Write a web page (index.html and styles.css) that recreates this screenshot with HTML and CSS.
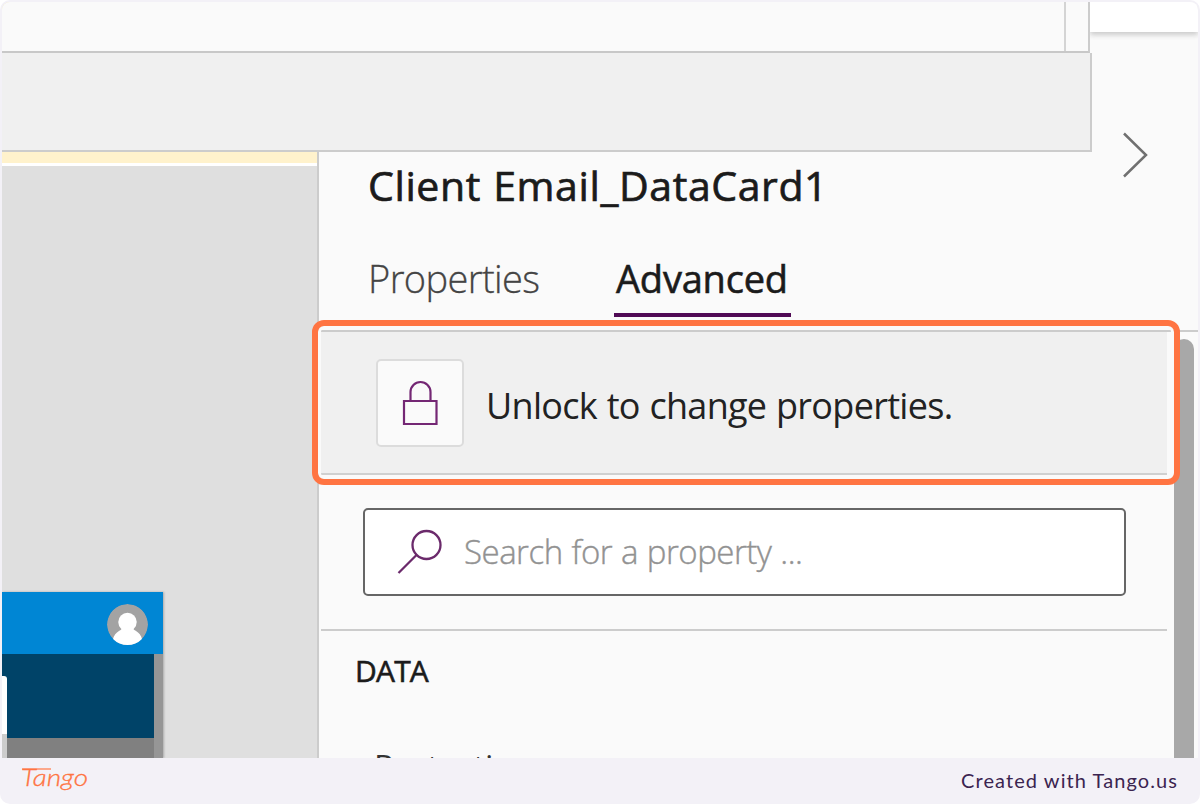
FILE: index.html
```html
<!DOCTYPE html>
<html lang="en">
<head>
<meta charset="utf-8">
<title>Client Email_DataCard1</title>
<link rel="stylesheet" href="styles.css">
</head>
<body>
<div class="frame">
  <div class="app">
    <div class="workspace">
      <main class="canvas">
        <div class="notice"></div>
        <div class="stage">
          <div class="preview">
            <div class="preview-bar">
              <svg class="avatar" viewBox="0 0 40 40"><defs><clipPath id="disc"><circle cx="20" cy="20" r="20"/></clipPath></defs><g clip-path="url(#disc)"><circle cx="20" cy="20" r="20" fill="#a3a3a3"/><circle cx="20" cy="17.5" r="9" fill="#fff"/><path d="M15 22h10q0 3 3 4 5 3 6 8v6H6v-6q1-5 6-8 3-1 3-4z" fill="#fff"/></g></svg>
            </div>
            <div class="preview-body"><div class="preview-card"></div></div>
          </div>
        </div>
      </main>
      <aside class="panel">
        <h1 class="title">Client Email_DataCard1</h1>
        <nav class="tabs">
          <a class="tab">Properties</a>
          <a class="tab active">Advanced</a>
        </nav>
        <div class="panel-body">
          <div class="content">
            <div class="lock-row">
              <button class="lock-button"><svg width="36" height="46" viewBox="0 0 36 46" fill="none" stroke="#742774" stroke-width="2.2"><path d="M8.5 21V12a10 10 0 0 1 20 0V21M2 21h32.500v23h-32.500z"/></svg></button>
              <span class="lock-text">Unlock to change properties.</span>
            </div>
            <div class="search">
              <svg width="46" height="46" viewBox="0 0 46 46" fill="none" stroke="#6b2a6b" stroke-width="2.3"><circle cx="29.500" cy="16" r="14"/><path d="M19.500 26 1.500 44"/></svg>
              <span class="search-text">Search for a property ...</span>
            </div>
            <section class="group">
              <h2 class="group-title">DATA</h2>
              <div class="field">Protection</div>
            </section>
          </div>
          <div class="scrollbar"></div>
        </div>
      </aside>
    </div>
    <div class="topbar"></div>
    <div class="formula">
      <div class="formula-input"><div class="formula-toggle"></div></div>
      <div class="formula-result"></div>
    </div>
    <svg class="chevron" width="28" height="48" viewBox="0 0 28 48" fill="none" stroke="#707070" stroke-width="2.5"><path d="M3 2.500 25 24 3 45.500"/></svg>
    <div class="highlight"></div>
  </div>
  <footer class="footer">
    <svg class="brand" width="74" height="40" viewBox="0 0 74 40"><path d="M2 6h29" stroke="#ff8f68" stroke-width="1.600"/><text x="1" y="23" textLength="67" lengthAdjust="spacingAndGlyphs">Tango</text></svg>
    <span class="credit">Created with Tango.us</span>
  </footer>
</div>
</body>
</html>
```
FILE: styles.css
```css
* { box-sizing: border-box; }
body { margin: 0; background: #fff; font-family: "Open Sans", "Noto Sans", sans-serif; }
.frame { width: 1200px; height: 804px; padding: 2px 2px 0; background: #f3f1f7; border-radius: 10px; display: flex; flex-direction: column; overflow: hidden; }
.app { position: relative; height: 756px; flex: none; overflow: hidden; border-radius: 8px 8px 0 0; background: #fafafa; }
.workspace { display: flex; height: 756px; }
.canvas { width: 315px; flex: none; background: #dfdfdf; display: flex; flex-direction: column; }
.notice { height: 164px; background: #fff2cc; border-bottom: 3px solid #fff; }
.stage { flex: 1; display: flex; align-items: flex-end; }
.preview { width: 161px; height: 166px; display: flex; flex-direction: column; box-shadow: 1px 0 2px #aaa; background: #969696; }
.preview-bar { height: 62px; background: #0086d4; padding: 12px 15px 0 0; display: flex; justify-content: flex-end; }
.avatar { width: 41px; height: 41px; }
.preview-body { width: 152px; height: 104px; background: linear-gradient(#004368 84px, #808080 84px); padding-top: 22px; }
.preview-card { width: 5px; height: 82px; background: linear-gradient(#fff 58px, #ccc 58px); border-radius: 0 3px 0 0; }
.panel { flex: 1; border-left: 2px solid #ccc; background: #fafafa; padding-top: 159px; display: flex; flex-direction: column; }
.title { margin: 0 0 0 49px; height: 48px; line-height: 48px; font-size: 41px; font-weight: 400; -webkit-text-stroke: .7px #1b1b1b; color: #1b1b1b; white-space: nowrap; letter-spacing: .6px; word-spacing: 1px; }
.tabs { height: 121px; padding: 45px 0 0 47px; display: flex; gap: 72px; }
.tab { height: 63px; line-height: 48px; padding: 0 2px; font-size: 38px; font-weight: 300; -webkit-text-stroke: .3px #444; color: #444; letter-spacing: -.6px; width: 175px; white-space: nowrap; }
.tab.active { width: 177px; border-bottom: 4px solid #500a55; font-weight: 400; -webkit-text-stroke: .6px #1b1b1b; color: #1b1b1b; margin-left: 1px; letter-spacing: -.2px; }
.panel-body { flex: 1; border-top: 2px solid #ccc; display: flex; gap: 7px; min-height: 0; }
.content { width: 848px; overflow: hidden; }
.lock-row { height: 143px; background: #f0f0f0; border-bottom: 2px solid #d0d0d0; display: flex; align-items: center; padding-left: 57px; gap: 22px; }
.lock-button { width: 88px; height: 88px; padding: 0; background: #fafafa; border: 2px solid #dcdcdc; border-radius: 5px; display: flex; align-items: center; justify-content: center; }
.lock-text { font-size: 36px; line-height: 48px; color: #222; white-space: nowrap; letter-spacing: -.7px; word-spacing: 1px; margin-top: 6px; }
.search { margin: 33px 0 33px 44px; width: 763px; height: 88px; border: 2px solid #666; border-radius: 5px; background: #fff; display: flex; align-items: center; padding-left: 32px; gap: 21px; }
.search-text { font-size: 33px; line-height: 44px; font-weight: 300; -webkit-text-stroke: .4px #929292; color: #929292; white-space: nowrap; letter-spacing: -.5px; word-spacing: .8px; }
.group { border-top: 2px solid #ccc; margin-left: 2px; padding: 20px 0 0 34px; }
.group-title { margin: 0; font-size: 30px; line-height: 40px; font-weight: 400; -webkit-text-stroke: .6px #1b1b1b; color: #1b1b1b; letter-spacing: -.8px; }
.field { margin: 54px 0 0 19px; font-size: 33px; line-height: 44px; color: #333; }
.scrollbar { width: 20px; margin-top: 7px; background: #a8a8a8; border-radius: 10px 10px 0 0; }
.topbar { position: absolute; top: 0; right: 0; width: 108px; height: 30px; background: #fff; box-shadow: 0 3px 5px #ccc; }
.formula { position: absolute; top: 0; left: 0; width: 1090px; }
.formula-input { width: 1088px; height: 51px; background: #fafafa; border-right: 2px solid #ccc; border-bottom: 2px solid #c8c8c8; display: flex; justify-content: flex-end; }
.formula-toggle { width: 24px; border-left: 2px solid #d4d4d4; }
.formula-result { height: 99px; background: #f0f0f0; border-right: 2px solid #ccc; border-bottom: 2px solid #ccc; }
.chevron { position: absolute; left: 1119px; top: 129px; }
.highlight { position: absolute; left: 310px; top: 318px; width: 868px; height: 165px; border: 6px solid #ff7442; border-radius: 12px; box-shadow: inset 0 0 0 3px #fafafa; }
.footer { flex: 1; display: flex; justify-content: space-between; align-items: center; padding: 0 20px 0 18px; }
.brand { margin-top: 3px; }
.brand text { font-family: Lato, sans-serif; font-style: italic; font-weight: 300; font-size: 24px; fill: #ff7442; stroke: #ff7442; stroke-width: .3px; }
.credit { font-family: Lato, sans-serif; font-size: 20px; line-height: 28px; color: #3b2450; letter-spacing: 1.08px; margin-top: -3px; }
```
